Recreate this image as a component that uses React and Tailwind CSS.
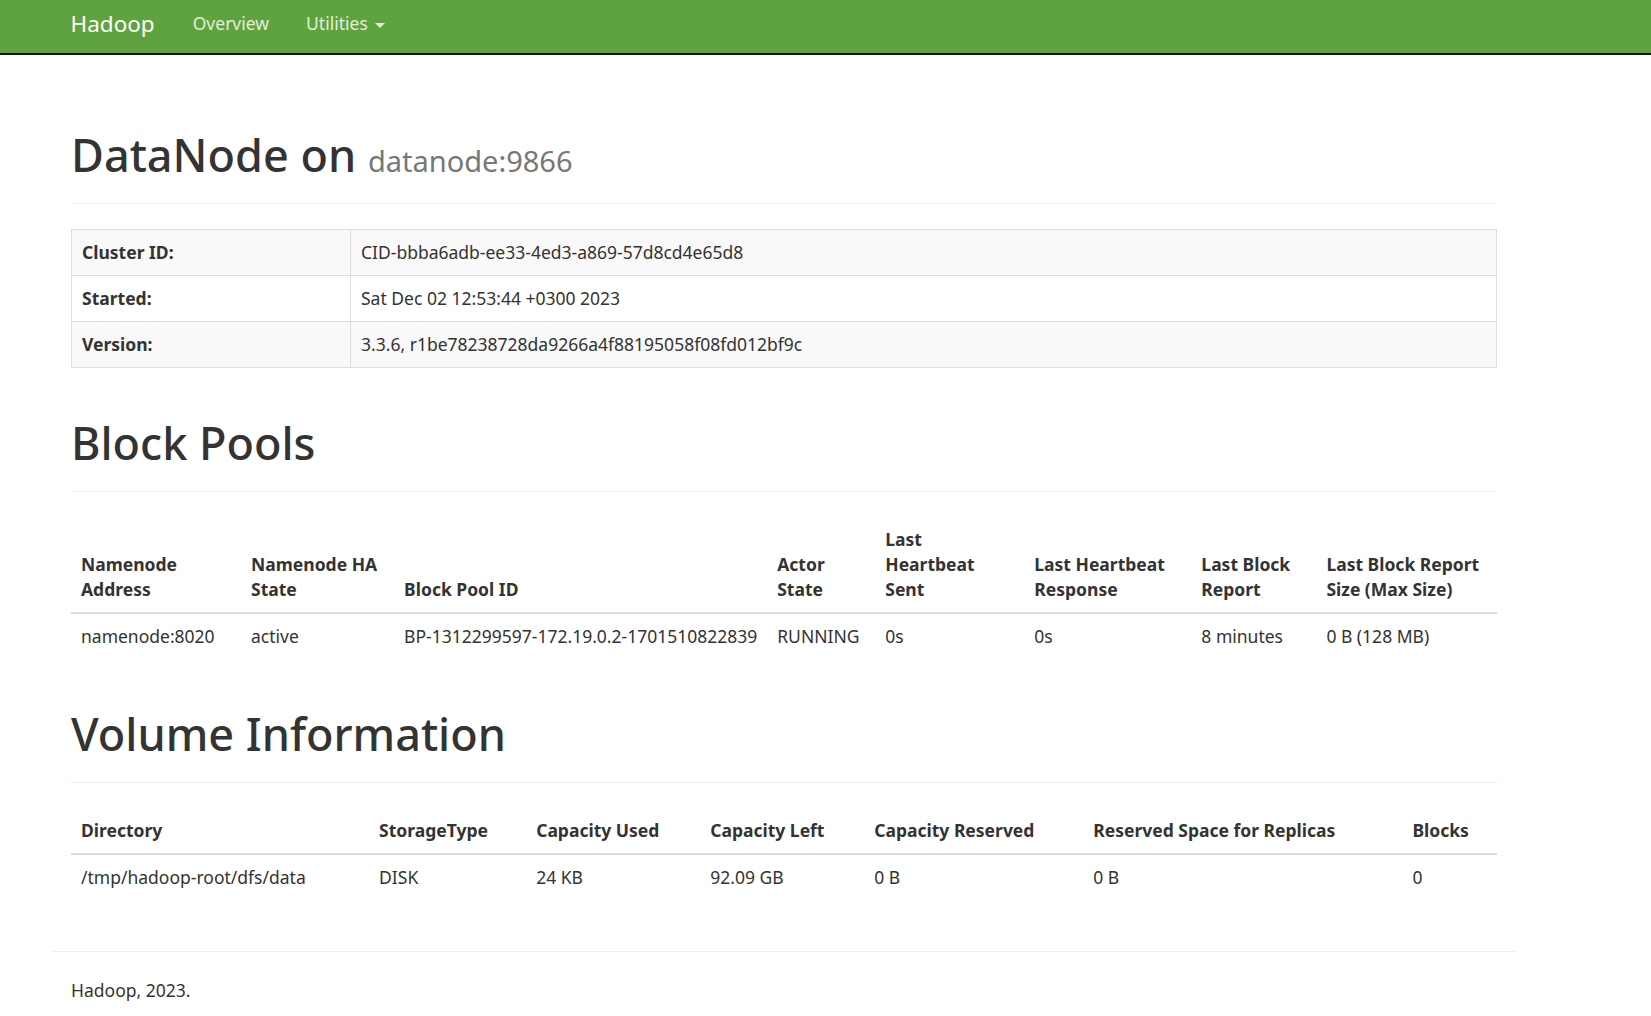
import React from 'react';

const infoRows = [
    { label: 'Cluster ID:', value: 'CID-bbba6adb-ee33-4ed3-a869-57d8cd4e65d8' },
    { label: 'Started:', value: 'Sat Dec 02 12:53:44 +0300 2023' },
    { label: 'Version:', value: '3.3.6, r1be78238728da9266a4f88195058f08fd012bf9c' }
];

const poolCols = [
    { w: 'w-[170px]', head: ['Namenode', 'Address'], value: 'namenode:8020' },
    { w: 'w-[153px]', head: ['Namenode HA', 'State'], value: 'active' },
    { w: 'w-[373px]', head: ['Block Pool ID'], value: 'BP-1312299597-172.19.0.2-1701510822839' },
    { w: 'w-[108px]', head: ['Actor', 'State'], value: 'RUNNING' },
    { w: 'w-[149px]', head: ['Last', 'Heartbeat', 'Sent'], value: '0s' },
    { w: 'w-[167px]', head: ['Last Heartbeat', 'Response'], value: '0s' },
    { w: 'w-[125px]', head: ['Last Block', 'Report'], value: '8 minutes' },
    { w: 'w-[180px]', head: ['Last Block Report', 'Size (Max Size)'], value: '0 B (128 MB)' }
];

const volumeCols = [
    { w: 'w-[298px]', head: 'Directory', value: '/tmp/hadoop-root/dfs/data' },
    { w: 'w-[157px]', head: 'StorageType', value: 'DISK' },
    { w: 'w-[174px]', head: 'Capacity Used', value: '24 KB' },
    { w: 'w-[164px]', head: 'Capacity Left', value: '92.09 GB' },
    { w: 'w-[219px]', head: 'Capacity Reserved', value: '0 B' },
    { w: 'w-[319px]', head: 'Reserved Space for Replicas', value: '0 B' },
    { w: 'w-[94px]', head: 'Blocks', value: '0' }
];

const PageHeader = ({ children, top }) => (
    <div className={`${top} pb-[11px] mb-[25px] border-b border-[#eeeeee]`}>
        <h1 className="text-[45px] leading-[49.5px] font-medium text-[#333333] mb-[12.5px]">{children}</h1>
    </div>
);

const Navbar = () => (
    <nav className="h-[55px] bg-[#5fa33e] border-b-2 border-[#101010]">
        <div className="ml-[52.5px] w-[1462.5px] px-[18px] h-[53px] flex items-center">
            <span className="text-[22.5px] text-white leading-none mr-[38px] pb-[4px]">Hadoop</span>
            <span className="text-[17.5px] text-[#e2eedb] mr-[37px] pb-[6px]">Overview</span>
            <span className="text-[17.5px] text-[#e2eedb] flex items-center pb-[6px]">
                Utilities
                <span className="ml-[7px] mt-[3px] w-0 h-0 border-t-[5px] border-t-[#e2eedb] border-x-[5px] border-x-transparent" />
            </span>
        </div>
    </nav>
);

export default function App() {
    return (
        <div className="min-h-screen bg-white text-[#333333] text-[17.5px] leading-[25px] font-['Noto_Sans','Open_Sans',sans-serif]">
            <Navbar />

            <div className="ml-[52.5px] w-[1462.5px]">
                <div className="px-[18.5px]">
                    <PageHeader top="mt-[75px]">
                        DataNode on <small className="text-[29px] leading-none font-normal text-[#777777]">datanode:9866</small>
                    </PageHeader>

                    <table className="w-full table-fixed border-collapse border border-[#dddddd]">
                        <colgroup>
                            <col className="w-[279px]" />
                            <col />
                        </colgroup>
                        <tbody>
                            {infoRows.map((row, i) => (
                                <tr key={row.label} className={i % 2 === 0 ? 'bg-[#f9f9f9]' : 'bg-white'}>
                                    <th className="text-left font-bold px-[10px] py-[10px] border border-[#dddddd] align-top">{row.label}</th>
                                    <td className="px-[10px] py-[10px] border border-[#dddddd] align-top">{row.value}</td>
                                </tr>
                            ))}
                        </tbody>
                    </table>

                    <PageHeader top="mt-[50px]">Block Pools</PageHeader>

                    <table className="w-full table-fixed border-collapse">
                        <colgroup>
                            {poolCols.map((c) => (
                                <col key={c.value + c.w} className={c.w} />
                            ))}
                        </colgroup>
                        <thead>
                            <tr>
                                {poolCols.map((c) => (
                                    <th key={c.head.join()} className="text-left font-bold align-bottom whitespace-nowrap px-[10px] py-[10px] border-b-2 border-[#dddddd]">
                                        {c.head.map((line) => (
                                            <div key={line}>{line}</div>
                                        ))}
                                    </th>
                                ))}
                            </tr>
                        </thead>
                        <tbody>
                            <tr>
                                {poolCols.map((c) => (
                                    <td key={c.head.join()} className="px-[10px] py-[10px] whitespace-nowrap align-top">{c.value}</td>
                                ))}
                            </tr>
                        </tbody>
                    </table>

                    <PageHeader top="mt-[50px]">Volume Information</PageHeader>

                    <table className="w-full table-fixed border-collapse">
                        <colgroup>
                            {volumeCols.map((c) => (
                                <col key={c.head} className={c.w} />
                            ))}
                        </colgroup>
                        <thead>
                            <tr>
                                {volumeCols.map((c) => (
                                    <th key={c.head} className="text-left font-bold align-bottom whitespace-nowrap px-[10px] py-[10px] border-b-2 border-[#dddddd]">{c.head}</th>
                                ))}
                            </tr>
                        </thead>
                        <tbody>
                            <tr>
                                {volumeCols.map((c) => (
                                    <td key={c.head} className="px-[10px] py-[10px] whitespace-nowrap align-top">{c.value}</td>
                                ))}
                            </tr>
                        </tbody>
                    </table>
                </div>

                {/* footer */}
                <hr className="mt-[51px] mb-[26px] border-0 border-t border-[#eeeeee]" />
                <div className="px-[18.5px] pb-[13px]">
                    <p>Hadoop, 2023.</p>
                </div>
            </div>
        </div>
    );
}
